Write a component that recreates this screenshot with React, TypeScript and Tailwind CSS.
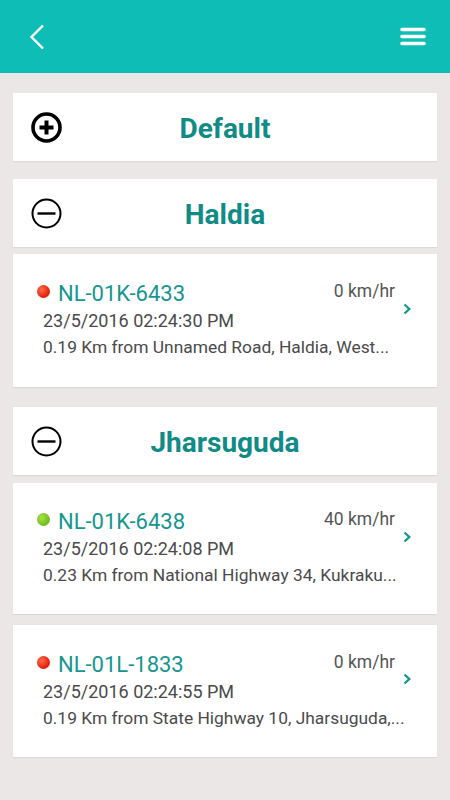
import React from 'react';

type Vehicle = {
  plate: string;
  speed: string;
  time: string;
  address: string;
  moving: boolean;
};

const haldia: Vehicle[] = [
  {
    plate: 'NL-01K-6433',
    speed: '0 km/hr',
    time: '23/5/2016 02:24:30 PM',
    address: '0.19 Km from Unnamed Road, Haldia, West...',
    moving: false,
  },
];

const jharsuguda: Vehicle[] = [
  {
    plate: 'NL-01K-6438',
    speed: '40 km/hr',
    time: '23/5/2016 02:24:08 PM',
    address: '0.23 Km from National Highway 34, Kukraku...',
    moving: true,
  },
  {
    plate: 'NL-01L-1833',
    speed: '0 km/hr',
    time: '23/5/2016 02:24:55 PM',
    address: '0.19 Km from State Highway 10, Jharsuguda,...',
    moving: false,
  },
];

function CircleIcon({ open }: { open: boolean }) {
  if (!open) {
    return (
      <svg width="31" height="31" viewBox="0 0 31 31">
        <circle cx="15.5" cy="15.5" r="13.5" fill="none" stroke="#000" strokeWidth="3.6" />
        <path d="M15.5 8.5v14M8.5 15.5h14" stroke="#000" strokeWidth="4" />
      </svg>
    );
  }
  return (
    <svg width="31" height="31" viewBox="0 0 31 31">
      <circle cx="15.5" cy="15.5" r="14" fill="none" stroke="#000" strokeWidth="2" />
      <path d="M6.5 15.5h18" stroke="#000" strokeWidth="2.4" />
    </svg>
  );
}

function GroupHeader({ title, open, className }: { title: string; open: boolean; className: string }) {
  return (
    <div className={`h-[68px] bg-white flex items-center shadow-[0_1px_1px_rgba(0,0,0,0.06)] ${className}`}>
      <div className="w-[49px] pl-[18px] flex items-center">
        <CircleIcon open={open} />
      </div>
      <div className="flex-1 text-center text-[28px] font-bold text-[#108b86] leading-none mt-[3px]">{title}</div>
      <div className="w-[49px]" />
    </div>
  );
}

function VehicleCard({ v, className }: { v: Vehicle; className: string }) {
  return (
    <div className={`bg-white flex items-center pl-[24px] pr-[26px] shadow-[0_1px_1px_rgba(0,0,0,0.06)] ${className}`}>
      <div className="flex-1 min-w-0">
        <div className="flex items-start justify-between pr-[8px]">
          <div className="flex items-center h-[28px]">
            <span
              className={`w-[13px] h-[13px] rounded-full mb-[5px] ${
                v.moving
                  ? 'bg-[radial-gradient(circle_at_35%_35%,#a6e04a,#72bf1c_65%)]'
                  : 'bg-[radial-gradient(circle_at_35%_35%,#ff6b48,#e3200c_65%)]'
              }`}
            />
            <span className="ml-[8px] text-[22px] leading-[28px] text-[#17958f]">{v.plate}</span>
          </div>
          <span className="text-[17.5px] leading-[22px] text-[#555]">{v.speed}</span>
        </div>
        <div className="pl-[6px] text-[18px] leading-[25px] text-[#4a4a4a] whitespace-nowrap">{v.time}</div>
        <div className="pl-[6px] text-[17.4px] leading-[28px] text-[#4a4a4a] whitespace-nowrap">{v.address}</div>
      </div>
      <div className="mb-[24px] shrink-0">
        <svg width="8" height="12" viewBox="0 0 8 12">
          <polyline points="1.5,1.5 6.3,6 1.5,10.5" fill="none" stroke="#17958f" strokeWidth="2.3" />
        </svg>
      </div>
    </div>
  );
}

export default function App() {
  return (
    <div className="w-[450px] h-[800px] bg-[#ebe7e6] font-['Roboto',sans-serif] overflow-hidden">
      <div className="h-[73px] bg-[#0dbdb6] flex items-center justify-between pl-[29px] pr-[24px]">
        <svg width="16" height="26" viewBox="0 0 16 26">
          <polyline points="14,1.5 2.5,13 14,24.5" fill="none" stroke="#fff" strokeWidth="2.4" />
        </svg>
        <svg width="26" height="19" viewBox="0 0 26 19">
          <path d="M2 2.5h22M2 9.5h22M2 16.5h22" stroke="#fff" strokeWidth="3.6" strokeLinecap="round" />
        </svg>
      </div>

      <div className="px-[13px]">
        <GroupHeader title="Default" open={false} className="mt-[20px]" />

        <GroupHeader title="Haldia" open className="mt-[18px]" />
        {haldia.map((v) => (
          <VehicleCard key={v.plate} v={v} className="mt-[7px] h-[133px]" />
        ))}

        <GroupHeader title="Jharsuguda" open className="mt-[20px]" />
        <VehicleCard v={jharsuguda[0]} className="mt-[8px] h-[131px]" />
        <VehicleCard v={jharsuguda[1]} className="mt-[11px] h-[132px]" />
      </div>
    </div>
  );
}
